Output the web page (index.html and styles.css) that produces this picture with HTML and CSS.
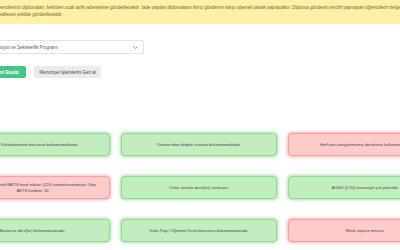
FILE: index.html
```html
<!DOCTYPE html>
<html lang="tr">

<head>
    <meta charset="UTF-8">
    <meta name="viewport" content="width=device-width, initial-scale=1.0">
    <title>Mezuniyet Denetimi</title>
    <link rel="stylesheet" href="styles.css">
</head>

<body>
    <div class="page">
        <div class="notice">
            <p>Mezun olan tüm öğrencilerinin diplomaları, belirtilen ocak tarihi adreslerine gönderilecektir. İade yapılan diplomaların ikinci gönderimi karşı ödemeli olarak yapılacaktır. Diploma gönderim tercihi yapmayan öğrencilerin belgeleri elden teslim</p>
            <p>imzalı elden teslim edilecek şekilde gönderilecektir.</p>
        </div>

        <div class="programSelect">
            <span>Büro Ofis Organizasyon ve Sekreterlik Programı</span>
            <svg class="chev" width="5" height="3" viewBox="0 0 5 3"><path d="M0.5 0.5 L2.5 2.5 L4.5 0.5" fill="none" stroke="#777" stroke-width="0.8"/></svg>
        </div>

        <div class="actions">
            <button class="btn btnStart">Mezuniyet Denetimi Başlat</button>
            <button class="btn btnUndo">Mezuniyet İşlemlerini Geri al</button>
        </div>

        <div class="checks">
            <div class="check ok">Merkez Kütüphanesine borcunuz bulunmamaktadır.</div>
            <div class="check ok">Devam eden disiplin cezanız bulunmamaktadır.</div>
            <div class="check fail">Harf notu onaylanmamış dersleriniz bulunmaktadır.</div>
            <div class="check fail">Mezuniyet için gerekli AKTS kredi miktarı (120) tamamlanmamıştır. Stajı AKTS krediniz: 30</div>
            <div class="check ok">Ortak zorunlu ders(ler)i alınmıştır.</div>
            <div class="check ok">AGNO (2.90) mezuniyet için yeterlidir.</div>
            <div class="check ok">Başarısız ders(ler) bulunmamaktadır.</div>
            <div class="check ok">Katkı Payı / Öğrenim Ücreti borcunuz bulunmamaktadır.</div>
            <div class="check fail">Eksik stajınız mevcut.</div>
        </div>
    </div>
</body>

</html>
```

FILE: styles.css
```css
* {
    margin: 0;
    box-sizing: border-box;
}

body {
    width: 400px;
    height: 250px;
    overflow: hidden;
    background: #fff;
    font-family: "Liberation Sans", Arial, sans-serif;
    font-size: 4px;
    color: #444;
}

.page {
    width: 488px;
    margin-left: -45px;
}

.notice {
    height: 24px;
    padding: 4px 6px 0;
    font-size: 4.5px;
    line-height: 7px;
    white-space: nowrap;
    background: #fdf0ab;
    color: #7a6420;
}

.programSelect {
    width: 189px;
    height: 14px;
    margin-top: 16px;
    padding: 0 5px 0 6px;
    display: flex;
    align-items: center;
    justify-content: space-between;
    border: 1px solid #e2e2e2;
    border-radius: 2px;
    font-size: 4.5px;
    color: #555;
}

.actions {
    margin-top: 12px;
    display: flex;
    gap: 8px;
}

.btn {
    height: 12px;
    padding: 0 5.5px;
    border: none;
    border-radius: 2px;
    font-family: inherit;
    font-size: 4.5px;
}

.btnStart {
    padding: 0 7px;
    background: #45c485;
    color: #fff;
    font-weight: bold;
}

.btnUndo {
    background: #ececec;
    color: #444;
}

.checks {
    margin-top: 55px;
    display: grid;
    grid-template-columns: repeat(3, 1fr);
    column-gap: 11px;
    row-gap: 20px;
}

.check {
    min-height: 23px;
    padding: 4px 8px;
    display: flex;
    align-items: center;
    justify-content: center;
    text-align: center;
    line-height: 6px;
    border-radius: 4px;
}

.ok {
    background: #c1edbf;
    border: 1px solid #94d892;
    box-shadow: 0 0 3px 1px rgba(90, 190, 90, 0.5);
}

.fail {
    background: #ffcaca;
    border: 1px solid #ff9c9c;
    box-shadow: 0 0 3px 1px rgba(255, 100, 100, 0.5);
}
```
